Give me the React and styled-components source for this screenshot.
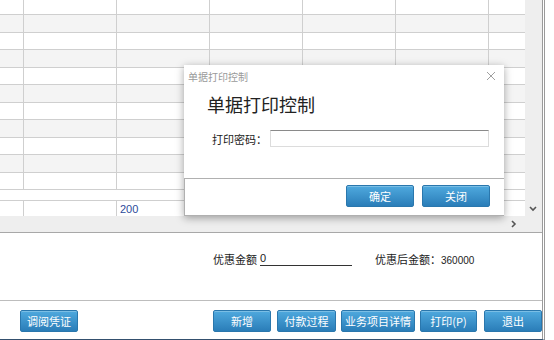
import React from "react";
import styled, { createGlobalStyle } from "styled-components";

const Global = createGlobalStyle`
  html, body { margin: 0; padding: 0; background: #fff; }
  body { font-family: "Noto Sans CJK SC", "Liberation Sans", sans-serif; font-size: 11px; color: #222; }
  #root { width: 554px; height: 340px; overflow: hidden; }
`;

const Page = styled.div`
  position: relative;
  width: 554px;
  height: 340px;
  overflow: hidden;
  background: #fff;
`;

const Frame = styled.div`
  width: 542px;
  height: 339px;
  border-right: 3px double #9a9a9a;
  border-bottom: 1px solid #34506e;
  display: flex;
  flex-direction: column;
`;

const GridArea = styled.div`
  display: grid;
  grid-template-columns: 525px 17px;
  grid-template-rows: 216px 16px;
  border-bottom: 1px solid #a8a8a8;
`;

const Table = styled.div`
  display: flex;
  flex-direction: column;
  overflow: hidden;
`;

const Row = styled.div`
  display: grid;
  grid-template-columns: 24px 93px 93px 93px 93px 93px 36px;
  height: ${(p) => p.$h}px;
  flex: none;
  box-sizing: border-box;
  border-bottom: 1px solid #cfcfcf;
  background: ${(p) => (p.$alt ? "#f4f4f4" : "#fff")};
`;

const Cell = styled.div`
  border-right: 1px solid #cfcfcf;
  font-family: "Liberation Sans", Arial, sans-serif;
  font-size: 11px;
  color: #2c4a9a;
  display: flex;
  align-items: center;
  padding-left: 3px;
  &:last-child { border-right: none; }
`;

const Blank = styled.div`
  height: 10px;
  flex: none;
  border-bottom: 1px solid #cfcfcf;
`;

const VScroll = styled.div`
  background: #eeeeee;
  display: flex;
  flex-direction: column;
  justify-content: flex-end;
  align-items: center;
  padding-bottom: 3px;
  padding-right: 2px;
  box-sizing: border-box;
`;

const HScroll = styled.div`
  background: #eeeeee;
  display: flex;
  justify-content: flex-end;
  align-items: center;
  padding-right: 7px;
`;

const Corner = styled.div`
  background: #eeeeee;
`;

const Totals = styled.div`
  height: 68px;
  display: flex;
  align-items: center;
  padding-left: 213px;
  padding-bottom: 16px;
  box-sizing: border-box;
  border-bottom: 1px solid #bdbdbd;
  font-size: 11px;
`;

const Field = styled.span`
  display: inline-block;
  width: 92px;
  margin-left: 3px;
  border-bottom: 1px solid #333;
  line-height: 13px;
  font-family: "Liberation Sans", Arial, sans-serif;
  font-size: 11px;
`;

const After = styled.span`
  margin-left: 23px;
`;

const Num = styled.span`
  font-family: "Liberation Sans", Arial, sans-serif;
  font-size: 10px;
`;

const Buttons = styled.div`
  flex: 1;
  display: flex;
  align-items: center;
  padding-left: 20px;
  padding-top: 1px;
`;

const Btn = styled.button`
  width: ${(p) => p.$w}px;
  height: 22px;
  margin-left: ${(p) => p.$ml || 0}px;
  padding: 0;
  border: 1px solid #2a77ad;
  border-radius: 2px;
  background: linear-gradient(#4fa9de, #2a7db8);
  color: #fff;
  font-family: "Noto Sans CJK SC", sans-serif;
  font-size: 11px;
  box-shadow: inset 0 1px 0 rgba(255,255,255,0.25);
`;

const Dialog = styled.div`
  position: absolute;
  left: 184px;
  top: 65px;
  width: 320px;
  height: 151px;
  background: #fff;
  box-shadow: 0 2px 8px rgba(0,0,0,0.35);
  display: flex;
  flex-direction: column;
  box-sizing: border-box;
`;

const TitleBar = styled.div`
  height: 22px;
  display: flex;
  align-items: center;
  justify-content: space-between;
  padding: 0 8px 0 4px;
  font-size: 10px;
  color: #9a9a9a;
`;

const Close = styled.svg`
  width: 10px;
  height: 10px;
`;

const Heading = styled.div`
  font-size: 18px;
  color: #222;
  padding-left: 23px;
  height: 34px;
  line-height: 34px;
`;

const FormRow = styled.div`
  display: flex;
  align-items: center;
  padding-left: 28px;
  margin-top: 9px;
  font-size: 11px;
`;

const Input = styled.div`
  width: 219px;
  height: 17px;
  margin-left: 3px;
  box-sizing: border-box;
  border: 1px solid #dcdcdc;
  border-top-color: #8a8a8a;
`;

const Footer = styled.div`
  margin-top: auto;
  height: 38px;
  box-sizing: border-box;
  border: 1px solid #b0b0b0;
  border-right: none;
  display: flex;
  justify-content: flex-end;
  align-items: center;
  gap: 8px;
  padding-right: 14px;
  padding-bottom: 2px;
`;

const cols = 7;
const heights = [15, 18, 17, 18, 17, 18, 17, 18, 17, 18, 17];

function Chevron({ dir }) {
  const d = dir === "down" ? "M1 2 L4 5 L7 2" : "M2 1 L5 4 L2 7";
  return (
    <svg width="8" height="8" viewBox="0 0 8 8">
      <path d={d} fill="none" stroke="#555" strokeWidth="1.6" />
    </svg>
  );
}

export default function App() {
  return (
    <Page>
      <Global />
      <Frame>
        <GridArea>
          <Table>
            {heights.map((h, i) => (
              <Row key={i} $h={h} $alt={i % 2 === 1}>
                {Array.from({ length: cols }).map((_, j) => (
                  <Cell key={j} />
                ))}
              </Row>
            ))}
            <Blank />
            <Row $h={17}>
              <Cell />
              <Cell />
              <Cell>200</Cell>
              <Cell />
              <Cell />
              <Cell />
              <Cell />
            </Row>
          </Table>
          <VScroll>
            <Chevron dir="down" />
          </VScroll>
          <HScroll>
            <Chevron dir="right" />
          </HScroll>
          <Corner />
        </GridArea>
        <Totals>
          优惠金额<Field>0</Field>
          <After>
            优惠后金额：<Num>360000</Num>
          </After>
        </Totals>
        <Buttons>
          <Btn $w={58}>调阅凭证</Btn>
          <Btn $w={58} $ml={135}>新增</Btn>
          <Btn $w={59} $ml={6}>付款过程</Btn>
          <Btn $w={74} $ml={5}>业务项目详情</Btn>
          <Btn $w={57} $ml={5}>打印(P)</Btn>
          <Btn $w={58} $ml={7}>退出</Btn>
        </Buttons>
      </Frame>
      <Dialog>
        <TitleBar>
          <span>单据打印控制</span>
          <Close viewBox="0 0 10 10">
            <path d="M1 1 L9 9 M9 1 L1 9" stroke="#a0a0a0" strokeWidth="1" fill="none" />
          </Close>
        </TitleBar>
        <Heading>单据打印控制</Heading>
        <FormRow>
          打印密码：<Input />
        </FormRow>
        <Footer>
          <Btn $w={68}>确定</Btn>
          <Btn $w={68}>关闭</Btn>
        </Footer>
      </Dialog>
    </Page>
  );
}
